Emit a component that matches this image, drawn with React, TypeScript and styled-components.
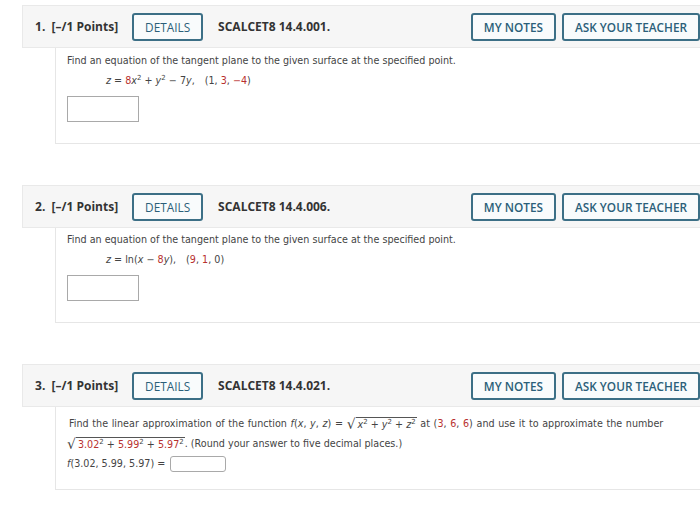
import React from "react";
import styled, { createGlobalStyle } from "styled-components";

const GlobalStyle = createGlobalStyle`
  html, body {
    margin: 0;
    padding: 0;
    background: #ffffff;
    overflow: hidden;
  }
`;

const Page = styled.div`
  width: 712px;
  padding-top: 5px;
  display: flex;
  flex-direction: column;
  gap: 41px;
`;

const Block = styled.section`
  display: flex;
  flex-direction: column;
`;

const Header = styled.div`
  margin-left: 22px;
  height: 43px;
  box-sizing: border-box;
  background: #f6f6f6;
  border: 1px solid #e9e9e9;
  display: flex;
  align-items: center;
  padding: 0 11px 0 12px;
  font-family: "Open Sans", "DejaVu Sans", sans-serif;
  color: #333;
`;

const Points = styled.span`
  font-size: 12px;
  font-weight: 700;
  margin-right: 14px;
  white-space: pre;
`;

const Code = styled.span`
  font-size: 12px;
  font-weight: 700;
  margin-left: 15px;
  flex: 1;
`;

const HeadButton = styled.button<{ $gap?: number; $light?: boolean }>`
  height: 28px;
  box-sizing: border-box;
  border: 2px solid #3c6f86;
  border-radius: 3px;
  background: #f9fbfc;
  color: #2b5f79;
  font-family: "Open Sans", "DejaVu Sans", sans-serif;
  font-size: 11.8px;
  font-weight: ${(p) => (p.$light ? 400 : 600)};
  padding: 0 11px;
  margin: 0 0 0 ${(p) => p.$gap ?? 0}px;
  cursor: pointer;
`;

const Panel = styled.div<{ $top: number; $bottom: number }>`
  margin-left: 55px;
  border-left: 1px solid #e6e6e6;
  border-bottom: 1px solid #e6e6e6;
  padding: ${(p) => p.$top}px 12px ${(p) => p.$bottom}px 11px;
  font-family: "DejaVu Sans", Verdana, sans-serif;
  font-size: 9.6px;
  color: #444;
  line-height: 20px;
`;

const Line = styled.div<{ $indent?: number; $spread?: number }>`
  padding-left: ${(p) => p.$indent ?? 0}px;
  word-spacing: ${(p) => p.$spread ?? 0}px;
  white-space: nowrap;
`;

const Red = styled.span`
  color: #b8302e;
`;

const Var = styled.i`
  font-style: italic;
`;

const Sup = styled.sup`
  font-size: 7px;
  line-height: 0;
  vertical-align: 4px;
`;

const Radical = styled.span`
  display: inline-flex;
  align-items: flex-end;
  line-height: 12px;
  vertical-align: -2px;
  word-spacing: 0;
`;

const RootSign = styled.span`
  font-size: 14px;
  color: #444;
`;

const Radicand = styled.span`
  border-top: 1px solid #555;
  padding: 1px 1px 0 2px;
  line-height: 11px;
`;

const AnswerBox = styled.div<{ $w: number; $h: number; $inline?: boolean }>`
  width: ${(p) => p.$w}px;
  height: ${(p) => p.$h}px;
  box-sizing: border-box;
  border: 1px solid #a9a9a9;
  border-radius: ${(p) => (p.$inline ? 3 : 0)}px;
  background: #fff;
  display: ${(p) => (p.$inline ? "inline-block" : "block")};
  vertical-align: middle;
  margin: ${(p) => (p.$inline ? "0 0 0 2px" : "5px 0 0 0")};
`;

const Sp = styled.span<{ $w: number }>`
  display: inline-block;
  width: ${(p) => p.$w}px;
`;

type QProps = {
  num: number;
  code: string;
  top: number;
  bottom: number;
  children: React.ReactNode;
};

const Question = ({ num, code, top, bottom, children }: QProps) => (
  <Block>
    <Header>
      <Points>{num}.  [–/1 Points]</Points>
      <HeadButton $light>DETAILS</HeadButton>
      <Code>{code}</Code>
      <HeadButton>MY NOTES</HeadButton>
      <HeadButton $gap={6}>ASK YOUR TEACHER</HeadButton>
    </Header>
    <Panel $top={top} $bottom={bottom}>
      {children}
    </Panel>
  </Block>
);

const PROMPT =
  "Find an equation of the tangent plane to the given surface at the specified point.";

export default function App() {
  return (
    <>
      <GlobalStyle />
      <Page>
        <Question num={1} code="SCALCET8 14.4.001." top={3} bottom={21}>
          <Line>{PROMPT}</Line>
          <Line $indent={39}>
            <Var>z</Var> = <Red>8</Red>
            <Var>x</Var>
            <Sup>2</Sup> + <Var>y</Var>
            <Sup>2</Sup> − 7<Var>y</Var>,<Sp $w={10} />(1, <Red>3</Red>,{" "}
            <Red>−4</Red>)
          </Line>
          <AnswerBox $w={72} $h={26} />
        </Question>

        <Question num={2} code="SCALCET8 14.4.006." top={2} bottom={21}>
          <Line>{PROMPT}</Line>
          <Line $indent={39}>
            <Var>z</Var> = ln(<Var>x</Var> − <Red>8</Red>
            <Var>y</Var>),<Sp $w={10} />(<Red>9</Red>, <Red>1</Red>, 0)
          </Line>
          <AnswerBox $w={72} $h={26} />
        </Question>

        <Question num={3} code="SCALCET8 14.4.021." top={7} bottom={15}>
          <Line $indent={2} $spread={0.6}>
            Find the linear approximation of the function <Var>f</Var>(
            <Var>x</Var>, <Var>y</Var>, <Var>z</Var>) ={" "}
            <Radical>
              <RootSign>√</RootSign>
              <Radicand>
                <Var>x</Var>
                <Sup>2</Sup> + <Var>y</Var>
                <Sup>2</Sup> + <Var>z</Var>
                <Sup>2</Sup>
              </Radicand>
            </Radical>{" "}
            at (<Red>3</Red>, <Red>6</Red>, <Red>6</Red>) and use it to
            approximate the number
          </Line>
          <Line>
            <Radical>
              <RootSign>√</RootSign>
              <Radicand>
                <Red>3.02</Red>
                <Sup>2</Sup> + <Red>5.99</Red>
                <Sup>2</Sup> + <Red>5.97</Red>
                <Sup>2</Sup>
              </Radicand>
            </Radical>
            . (Round your answer to five decimal places.)
          </Line>
          <Line>
            <Var>f</Var>(3.02, 5.99, 5.97) ={" "}
            <AnswerBox $w={56} $h={16} $inline />
          </Line>
        </Question>
      </Page>
    </>
  );
}
